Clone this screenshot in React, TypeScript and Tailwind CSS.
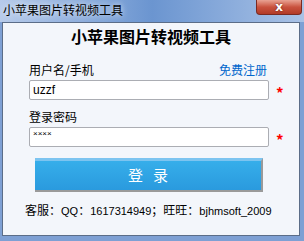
import React from 'react'

const cjk = { fontFamily: '"Noto Sans CJK SC", "Liberation Sans", sans-serif' }
const latin = { fontFamily: '"Liberation Sans", Arial, sans-serif' }

function Star() {
  return <span className="ml-[7px] mt-[4px] text-[15px] font-bold leading-none text-[#ff0000]">*</span>
}

export default function App() {
  return (
    <div
      className="flex h-[241px] w-[304px] flex-col overflow-hidden bg-[#7ea0d4]"
      style={cjk}
    >
      {/* Title bar */}
      <div className="relative flex h-[22px] items-start bg-gradient-to-r from-[#b7cbea] via-[#6b95d0] to-[#a9c2e6]">
        <span className="ml-[3px] mt-[3px] text-[12px] leading-[14px] text-black [text-shadow:0_0_6px_#ffffff]">
          小苹果图片转视频工具
        </span>
        <div className="absolute right-[2px] top-0 flex h-[15px] w-[46px] items-center justify-center rounded-b-[4px] border border-t-0 border-[#7a2a22] bg-gradient-to-b from-[#e8a293] via-[#c9523e] to-[#b23a27]">
          <span className="text-[12px] font-bold leading-none text-white [text-shadow:0_0_2px_#5a1a10]" style={{ fontFamily: 'Verdana, "DejaVu Sans", sans-serif' }}>
            x
          </span>
        </div>
      </div>

      {/* Content panel */}
      <div className="mb-[5px] ml-[2px] mr-[4px] flex flex-1 flex-col border border-[#5b6d88] bg-[#f3f6fb]">
        <div className="mt-[5px] text-center text-[16px] font-bold leading-[16px] text-black">
          小苹果图片转视频工具
        </div>

        <div className="ml-[26px] mt-[19px] flex w-[240px] items-end justify-between text-[12px] leading-[14px]">
          <span className="text-black">用户名/手机</span>
          <span className="mr-[2px] text-[#0066cc]">免费注册</span>
        </div>
        <div className="ml-[26px] mt-[3px] flex items-center">
          <div className="flex h-[20px] w-[240px] items-center rounded-[2px] border border-[#abadb3] bg-white pl-[3px] text-[12px] text-black" style={latin}>
            uzzf
          </div>
          <Star />
        </div>

        <div className="ml-[26px] mt-[10px] text-[12px] leading-[14px] text-black">登录密码</div>
        <div className="ml-[26px] mt-[3px] flex items-center">
          <div className="flex h-[20px] w-[240px] items-start rounded-[2px] border border-[#abadb3] bg-white pl-[3px] text-[8px] leading-[12px] text-black" style={latin}>
            ××××
          </div>
          <Star />
        </div>

        <div className="ml-[32px] mt-[11px] flex h-[34px] w-[228px] items-center justify-center border-r-2 border-b-2 border-t-[3px] border-r-[#9a9a9a] border-b-[#9a9a9a] border-t-[#7cc4f0] bg-gradient-to-b from-[#36aeea] to-[#2a9ade] text-[15px] tracking-[10px] text-white">
          <span className="ml-[10px]">登录</span>
        </div>

        <div className="ml-[22px] mt-[11px] whitespace-nowrap text-[12px] leading-[14px] text-black">
          客服：<span className="text-[11px]" style={latin}>QQ</span>：<span className="text-[11px]" style={latin}>1617314949</span>；旺旺：<span className="text-[11px]" style={latin}>bjhmsoft_2009</span>
        </div>
      </div>
    </div>
  )
}
